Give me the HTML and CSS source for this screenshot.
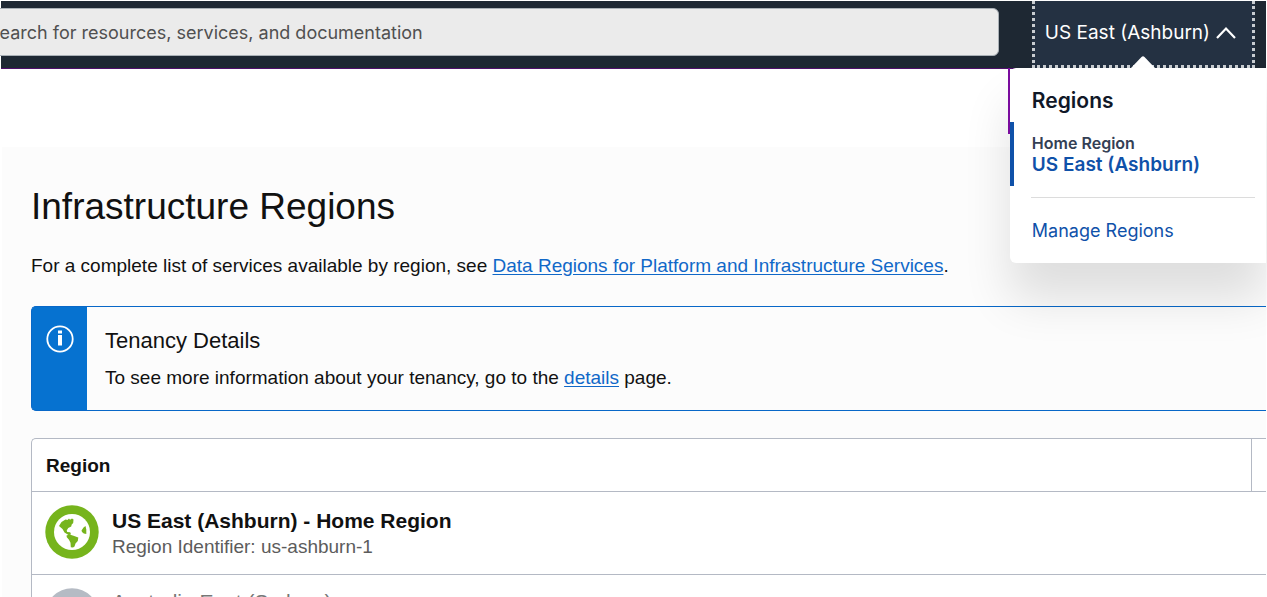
FILE: index.html
```html
<!DOCTYPE html>
<html lang="en">
<head>
<meta charset="utf-8">
<title>Infrastructure Regions</title>
<link rel="stylesheet" href="styles.css">
</head>
<body>
<header class="topbar">
  <input class="search" type="search" aria-label="Search" placeholder="Search for resources, services, and documentation">
  <div class="region-picker">
    <button class="region-button" type="button" aria-expanded="true">
      <span>US East (Ashburn)</span>
      <svg class="chevron" viewBox="0 0 20 14" aria-hidden="true"><path d="M1 12 10 2.500l9 9.500" fill="none" stroke="currentColor" stroke-width="2.200"/></svg>
    </button>
    <svg class="pointer" viewBox="0 0 24 12" aria-hidden="true"><path d="M0 12 10.500 1q1.500-1.500 3 0L24 12z" fill="#fff"/></svg>
    <section class="region-menu">
      <h2 class="menu-title">Regions</h2>
      <div class="home-region">
        <div class="home-label">Home Region</div>
        <a class="home-name" href="#">US East (Ashburn)</a>
      </div>
      <hr class="menu-rule">
      <a class="manage" href="#">Manage Regions</a>
    </section>
  </div>
</header>
<main class="content">
  <h1 class="title">Infrastructure Regions</h1>
  <p class="intro">For a complete list of services available by region, see <a class="link" href="#">Data Regions for Platform and Infrastructure Services</a>.</p>
  <section class="notice">
    <div class="notice-side">
      <svg class="info" viewBox="0 0 28 28" aria-hidden="true"><circle cx="14" cy="14" r="12.700" fill="none" stroke="#fff" stroke-width="1.800"/><path d="M12 5.500h4v3h-4zM12 10h4v10.500h-4z" fill="#fff"/></svg>
    </div>
    <div class="notice-body">
      <h2 class="notice-title">Tenancy Details</h2>
      <p class="notice-text">To see more information about your tenancy, go to the <a class="link" href="#">details</a> page.</p>
    </div>
  </section>
  <table class="regions">
    <thead>
      <tr><th class="region-head">Region</th><th class="status-head"></th></tr>
    </thead>
    <tbody>
      <tr>
        <td colspan="2">
          <div class="region">
            <svg class="globe" viewBox="0 0 54 54" aria-hidden="true">
              <circle cx="27" cy="27" r="26.700" fill="#76b41c"/>
              <circle cx="27" cy="27" r="18" fill="#fff"/>
              <path fill="#76b41c" d="M14 21l2.500-4 4-2.500 2 .500 1.500-1.500 1 1.200 2-1.200 1.500 1-.300 3.500-1.500 1.500-.500 2-3 1.500-1.500 2.500.500 1.500 3 .200.800 2-2.500.800-4-2.500-2-3.500zM21.500 30.500l3-1 4 1.200 4.800 1.800-.500 3.500-2.300 2.500-1 3-1.500 1-2.200-.300-.300-4.500-1.500-3-2.200-2.500zM36.500 25.500l2-3 2-1.500.8 3.500v4.500l-2.500-.500-1.800-1.500z"/>
            </svg>
            <div>
              <div class="region-name">US East (Ashburn) - Home Region</div>
              <div class="region-id">Region Identifier: us-ashburn-1</div>
            </div>
          </div>
        </td>
      </tr>
      <tr>
        <td colspan="2">
          <div class="region inactive">
            <svg class="globe" viewBox="0 0 54 54" aria-hidden="true"><circle cx="27" cy="27" r="26.700" fill="#b5bbc4"/><circle cx="27" cy="27" r="18" fill="#fff"/></svg>
            <div>
              <div class="region-name">Australia East (Sydney)</div>
            </div>
          </div>
        </td>
      </tr>
    </tbody>
  </table>
</main>
</body>
</html>
```
FILE: styles.css
```css
* { box-sizing: border-box; }
body {
  margin: 0;
  padding: 1px 1px 0;
  height: 100vh;
  overflow: hidden;
  display: flex;
  flex-direction: column;
  background: #fff;
  color: #111;
  font: 19px/24px "Liberation Sans", Arial, sans-serif;
}
h1, h2, p { margin: 0; font-weight: 400; }
.topbar {
  flex: none;
  display: flex;
  justify-content: space-between;
  height: 68px;
  padding-right: 11px;
  background: #1e2833;
  border-bottom: 1px solid #50106c;
  font-family: Inter, sans-serif;
}
.search {
  flex: 1;
  min-width: 0;
  height: 48px;
  margin: 7px 33px 0 -32px;
  padding: 0 18px;
  border: 1px solid #a9b0b6;
  border-radius: 6px;
  background: #ebebeb;
  font: 18px/24px Inter, sans-serif;
}
.search::placeholder { color: #505050; opacity: 1; }
.region-picker { position: relative; }
.region-button {
  display: flex;
  align-items: center;
  gap: 6px;
  height: 67px;
  padding: 0 16px 0 10px;
  border: 3px dotted #c9cdd1;
  border-top: 0;
  background: #243142;
  color: #fff;
  font: 19px/24px Inter, sans-serif;
}
.chevron { width: 20px; height: 14px; }
.pointer {
  position: absolute;
  bottom: 0;
  left: 50%;
  width: 24px;
  height: 12px;
  margin-left: -12px;
}
.region-menu {
  position: absolute;
  top: 67px;
  left: -22px;
  right: -11px;
  padding: 21px 11px 20px 0;
  border-radius: 6px 0 0 6px;
  background: #fff;
  box-shadow: 0 36px 48px rgba(0, 0, 0, 0.12);
}
.region-menu::before {
  content: "";
  position: absolute;
  top: 0;
  left: -2px;
  width: 2px;
  height: 66px;
  background: #7a0c9e;
}
.menu-title { padding-left: 22px; font-size: 21px; line-height: 24px; font-weight: 600; color: #101828; }
.home-region {
  height: 64px;
  margin-top: 9px;
  padding: 10px 0 0 18px;
  border-left: 4px solid #0f51a9;
}
.home-label { font-size: 16px; line-height: 22px; font-weight: 600; color: #344054; }
.home-name { display: block; font-size: 19px; line-height: 22px; font-weight: 600; color: #0f51a9; text-decoration: none; }
.menu-rule { margin: 11px 0 0 21px; border: 0; border-top: 1px solid #dcdcdc; }
.manage { display: block; margin: 21px 0 0 22px; font-size: 18px; color: #0f51a9; text-decoration: none; }
.content {
  flex: 1;
  min-height: 0;
  margin: 78px 0 0 1px;
  padding: 36px 0 0 29px;
  background: #fcfcfc;
}
.title { font-size: 37px; line-height: 48px; }
.intro { margin-top: 23px; }
.link { color: #1068c8; text-underline-offset: 2px; }
.notice {
  display: flex;
  margin-top: 28px;
  border: 1px solid #0868c8;
  border-right: 0;
  border-radius: 5px 0 0 5px;
  background: #0672d0;
}
.notice-side { width: 55px; padding: 18px 0 0 14px; }
.info { display: block; width: 28px; height: 28px; }
.notice-body { flex: 1; padding: 22px 18px 20px; background: #fcfcfc; }
.notice-title { font-size: 22px; line-height: 24px; }
.notice-text { margin-top: 13px; }
.regions {
  width: 100%;
  margin-top: 27px;
  border: 1px solid #b4b9c4;
  border-right: 0;
  border-radius: 5px 0 0 0;
  border-spacing: 0;
  background: #fff;
}
.regions th { height: 53px; padding: 2px 14px 0; text-align: left; border-bottom: 1px solid #b4b9c4; }
.regions .status-head { width: 15px; padding: 0; border-left: 1px solid #b4b9c4; }
.regions td { padding: 13px 13px 14px; border-bottom: 1px solid #b4b9c4; }
.region { display: flex; gap: 13px; }
.globe { flex: none; width: 54px; height: 54px; }
.region-name { padding-top: 3px; font-size: 21px; line-height: 26px; font-weight: 700; }
.region-id { color: #5c5c5c; line-height: 26px; }
.inactive .region-name { padding-top: 1px; font-weight: 400; color: #777; }
```
